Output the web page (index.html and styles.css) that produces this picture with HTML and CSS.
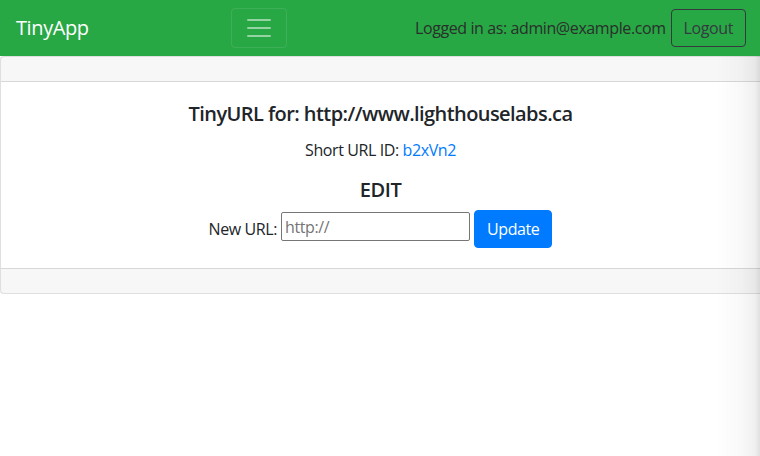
FILE: index.html
```html
<!DOCTYPE html>
<html lang="en">
<head>
<meta charset="utf-8">
<title>TinyApp</title>
<link rel="stylesheet" href="styles.css">
</head>
<body>
<nav class="navbar">
  <a class="brand" href="#">TinyApp</a>
  <button class="toggler" type="button" aria-label="Toggle navigation">
    <svg class="toggler-icon" viewBox="0 0 30 30" width="30" height="30"><path d="M4 7h22M4 15h22M4 23h22" stroke="rgba(255,255,255,0.5)" stroke-width="2" stroke-linecap="round" fill="none"/></svg>
  </button>
  <div class="nav-right">
    <span class="user">Logged in as: admin@example.com</span>
    <button class="btn btn-outline" type="button">Logout</button>
  </div>
</nav>
<main class="card">
  <div class="card-header"></div>
  <div class="card-body">
    <h5 class="card-title">TinyURL for: http://www.lighthouselabs.ca</h5>
    <p class="card-text">Short URL ID: <a class="link" href="#">b2xVn2</a></p>
    <h5 class="edit-title">EDIT</h5>
    <form class="edit-form">
      <label class="edit-label" for="newurl">New URL:</label>
      <input class="edit-input" id="newurl" type="text" placeholder="http://">
      <button class="btn btn-primary" type="button">Update</button>
    </form>
  </div>
  <div class="card-footer"></div>
</main>
<div class="edge-shadow"></div>
</body>
</html>
```
FILE: styles.css
```css
* { box-sizing: border-box; }
html, body { margin: 0; padding: 0; }
body {
  font-family: "Open Sans", "Noto Sans", sans-serif;
  font-size: 16px;
  line-height: 1.5;
  color: #212529;
  background: #fff;
  letter-spacing: -0.4px;
}
.navbar {
  display: flex;
  align-items: center;
  height: 56px;
  padding: 8px 14px 8px 16px;
  background: #28a745;
}
.brand {
  display: inline-block;
  width: 215px;
  padding: 5px 0;
  font-size: 20px;
  line-height: 30px;
  color: #fff;
  text-decoration: none;
}
.toggler {
  display: flex;
  align-items: center;
  justify-content: center;
  width: 56px;
  height: 40px;
  padding: 4px 12px;
  background: transparent;
  border: 1px solid rgba(255,255,255,0.1);
  border-radius: 4px;
}
.toggler-icon { display: block; }
.nav-right {
  margin-left: auto;
  display: flex;
  align-items: center;
  gap: 5px;
}
.user { color: #2a2f2b; }
.btn {
  font-family: inherit;
  font-size: 16px;
  line-height: 24px;
  padding: 6px 12px;
  border-radius: 4px;
  border: 1px solid transparent;
  letter-spacing: -0.4px;
  cursor: pointer;
}
.btn-outline {
  color: #343a40;
  background: transparent;
  border-color: #343a40;
}
.btn-primary {
  color: #fff;
  background: #007bff;
  border-color: #007bff;
}
.card {
  display: block;
  border: 1px solid rgba(0,0,0,0.125);
  border-right: 0;
  border-radius: 4px 0 0 4px;
}
.card-header {
  height: 25px;
  background: rgba(0,0,0,0.03);
  border-bottom: 1px solid rgba(0,0,0,0.125);
}
.card-body {
  padding: 20px;
  text-align: center;
}
.card-title, .edit-title {
  margin: 0 0 12px;
  font-size: 20px;
  font-weight: 600;
  line-height: 24px;
}
.card-title { letter-spacing: -0.57px; }
.edit-title { margin-bottom: 8px; }
.card-text { margin: 0 0 16px; }
.link { color: #007bff; text-decoration: none; }
.edit-form {
  display: flex;
  justify-content: center;
  align-items: center;
  gap: 4px;
}
.edit-input {
  align-self: flex-start;
  margin-top: 2px;
  width: 189px;
  height: 29px;
  padding: 1px 3px;
  font-family: inherit;
  font-size: 16px;
  letter-spacing: -0.4px;
  border: 1px solid #767676;
  border-radius: 2px;
  color: #212529;
}
.edit-input::placeholder { color: #757575; }
.card-footer {
  height: 25px;
  background: rgba(0,0,0,0.03);
  border-top: 1px solid rgba(0,0,0,0.125);
}
.edge-shadow {
  position: fixed;
  top: 56px;
  right: 0;
  bottom: 0;
  width: 44px;
  pointer-events: none;
  background: linear-gradient(to right, rgba(0,0,0,0) 0%, rgba(0,0,0,0.025) 55%, rgba(0,0,0,0.06) 88%, rgba(0,0,0,0.12) 100%);
}
```
